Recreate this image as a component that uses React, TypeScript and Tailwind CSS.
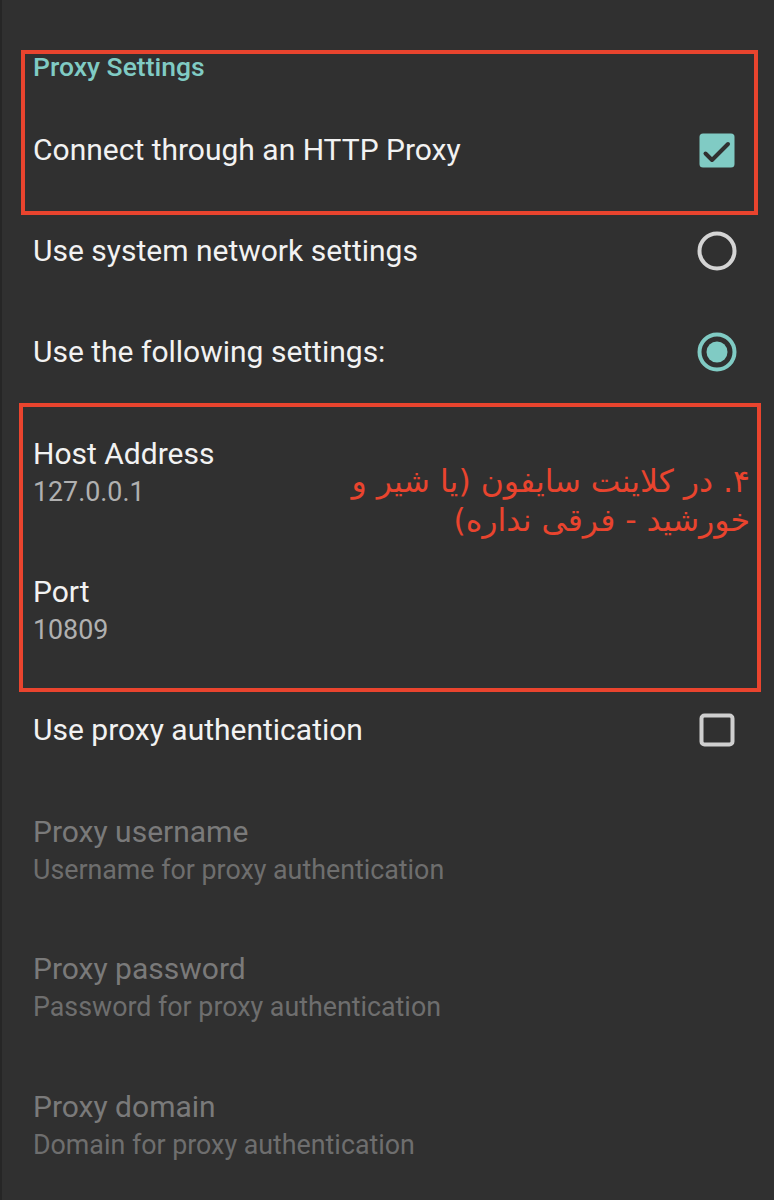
import React from "react";

const TEAL = "#80cbc4";

function CheckboxChecked() {
  return (
    <svg width="36" height="35" viewBox="0 0 36 35">
      <rect x="0.5" y="0.5" width="35" height="34" rx="3.5" fill={TEAL} />
      <path d="M6.5 20.5 L13 27 L29 11" fill="none" stroke="#303030" strokeWidth="4" strokeLinecap="round" strokeLinejoin="round" />
    </svg>
  );
}

function CheckboxEmpty() {
  return (
    <svg width="36" height="34" viewBox="0 0 36 34">
      <rect x="2.5" y="2.5" width="31" height="29" rx="3" fill="none" stroke="#cfcfcf" strokeWidth="4" />
    </svg>
  );
}

function Radio({ checked }: { checked: boolean }) {
  const c = checked ? TEAL : "#d4d4d4";
  return (
    <svg width="40" height="40" viewBox="0 0 40 40">
      <circle cx="20" cy="20" r="17.5" fill="none" stroke={c} strokeWidth="4" />
      {checked && <circle cx="20" cy="20" r="10.5" fill={c} />}
    </svg>
  );
}

function TwoLine({ title, sub, disabled, className }: { title: string; sub: string; disabled?: boolean; className?: string }) {
  return (
    <div className={className}>
      <div className={`leading-[38px] text-[30px] ${disabled ? "text-[#7a7a7a]" : "text-[#f2f2f2]"}`}>{title}</div>
      <div className={`leading-[38px] text-[26.8px] ${disabled ? "text-[#6e6e6e]" : "text-[#b0b0b0]"}`}>{sub}</div>
    </div>
  );
}

export default function App() {
  return (
    <div className="w-full h-[1200px] overflow-hidden bg-[#303030] flex font-['Roboto',sans-serif]">
      <div className="w-[2px] bg-[#262626] shrink-0" />
      <div className="flex-1 flex flex-col pt-[50px]">
        {/* Box 1 */}
        <div className="ml-[19px] mr-[16px] border-4 border-[#e9442e] pl-[8px] pr-[19px]">
          <div className="h-[26px] leading-[26px] text-[26.5px] font-medium text-[#80cbc4]">Proxy Settings</div>
          <div className="h-[131px] pt-[9px] flex items-center justify-between">
            <span className="text-[30px] text-[#f2f2f2] leading-[38px]">Connect through an HTTP Proxy</span>
            <CheckboxChecked />
          </div>
        </div>

        <div className="h-[72px] flex items-center justify-between pl-[31px] pr-[37px]">
          <span className="text-[30px] text-[#f2f2f2] leading-[38px]">Use system network settings</span>
          <Radio checked={false} />
        </div>

        <div className="h-[116px] pt-[14px] flex items-center justify-between pl-[31px] pr-[37px]">
          <span className="text-[30px] text-[#f2f2f2] leading-[38px]">Use the following settings:</span>
          <Radio checked={true} />
        </div>

        {/* Box 2 */}
        <div className="relative ml-[17px] mr-[13px] border-4 border-[#e9442e] pl-[10px] pt-[28px] pb-[39px]">
          <TwoLine title="Host Address" sub="127.0.0.1" />
          <TwoLine title="Port" sub="10809" className="mt-[62px]" />
          <div
            dir="rtl"
            className="absolute right-[7px] top-[55px] text-right text-[31.5px] leading-[39px] text-[#e9442e] font-['DejaVu_Sans',sans-serif]"
          >
            ۴. در کلاینت سایفون (یا شیر و
            <br />
            خورشید - فرقی نداره)
          </div>
        </div>

        <div className="h-[76px] flex items-center justify-between pl-[31px] pr-[39px]">
          <span className="text-[30px] text-[#f2f2f2] leading-[38px]">Use proxy authentication</span>
          <CheckboxEmpty />
        </div>

        <TwoLine className="pl-[31px] mt-[45px]" title="Proxy username" sub="Username for proxy authentication" disabled />
        <TwoLine className="pl-[31px] mt-[61px]" title="Proxy password" sub="Password for proxy authentication" disabled />
        <TwoLine className="pl-[31px] mt-[62px]" title="Proxy domain" sub="Domain for proxy authentication" disabled />
      </div>
    </div>
  );
}
